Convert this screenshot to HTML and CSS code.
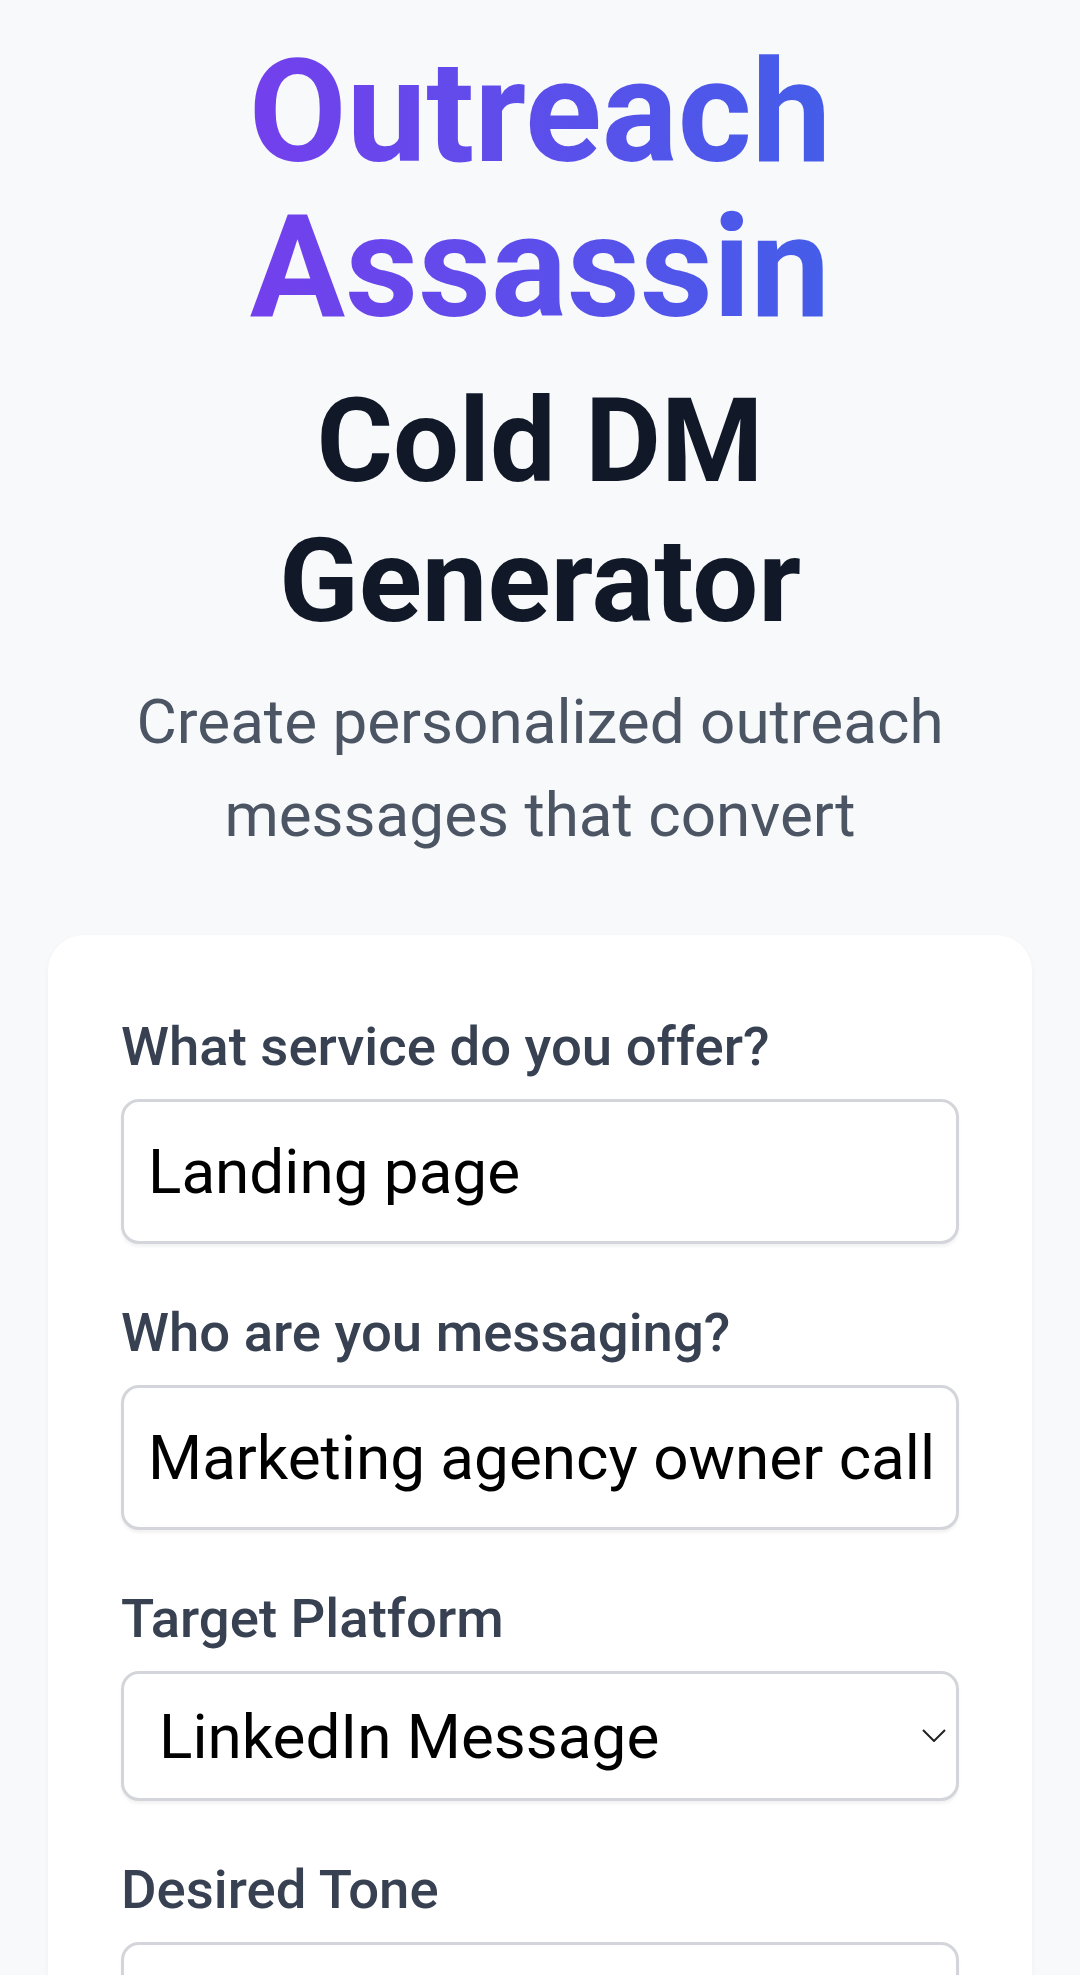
FILE: index.html
```html
<!DOCTYPE html>
<html lang="en">
<head>
  <meta charset="UTF-8">
  <meta name="viewport" content="width=device-width, initial-scale=1.0">
  <title>Outreach Assassin - Cold DM Generator</title>

  <link rel="stylesheet" href="styles.css">

</head>
<body>

  <div id="app">
    <header class="intro">
      <h1 class="brand">Outreach Assassin</h1>
      <h2 class="tool-name">Cold DM Generator</h2>
      <p class="subtitle">Create personalized outreach messages that convert</p>
    </header>

    <form class="card" onsubmit="return false">
      <div class="field">
        <label for="service">What service do you offer?</label>
        <input id="service" type="text" value="Landing page">
      </div>

      <div class="field">
        <label for="target">Who are you messaging?</label>
        <input id="target" type="text" value="Marketing agency owner call">
      </div>

      <div class="field">
        <label for="platform">Target Platform</label>
        <div class="select-wrap">
          <select id="platform">
            <option>LinkedIn Message</option>
            <option>Instagram DM</option>
            <option>Twitter / X DM</option>
            <option>Cold Email</option>
          </select>
          <svg class="chevron" viewBox="0 0 24 13" width="24" height="13">
            <path d="M1 1 L12 12 L23 1" fill="none" stroke="#222" stroke-width="2"/>
          </svg>
        </div>
      </div>

      <div class="field">
        <label for="tone">Desired Tone</label>
        <div class="select-wrap">
          <select id="tone">
            <option>Professional</option>
            <option>Friendly</option>
            <option>Casual</option>
          </select>
          <svg class="chevron" viewBox="0 0 24 13" width="24" height="13">
            <path d="M1 1 L12 12 L23 1" fill="none" stroke="#222" stroke-width="2"/>
          </svg>
        </div>
      </div>
    </form>
  </div>

</body>
</html>
```

FILE: styles.css
```css
* {
  margin: 0;
  padding: 0;
  box-sizing: border-box;
}

body {
  background: #f8f9fb;
  font-family: Roboto, "Noto Sans", sans-serif;
}

#app {
  padding: 35px 48px 0;
}

.intro {
  text-align: center;
}

.brand {
  font-size: 142px;
  line-height: 155px;
  font-weight: 700;
  width: fit-content;
  max-width: 800px;
  margin: 0 auto;
  background: linear-gradient(90deg, #7c3aed, #3b63e8);
  -webkit-background-clip: text;
  background-clip: text;
  color: transparent;
}

.tool-name {
  font-size: 117px;
  line-height: 140px;
  font-weight: 700;
  color: #111827;
  max-width: 760px;
  margin: 26px auto 0;
}

.subtitle {
  font-size: 62px;
  line-height: 93px;
  color: #4b5563;
  max-width: 900px;
  margin: 24px auto 0;
}

.card {
  margin-top: 74px;
  background: #fff;
  border-radius: 36px;
  padding: 72px 73px;
  box-shadow: 0 2px 6px rgba(17, 24, 39, 0.04);
}

.field + .field {
  margin-top: 49px;
}

.field label {
  display: block;
  font-size: 54.5px;
  line-height: 78px;
  font-weight: 500;
  color: #374151;
  margin-bottom: 14px;
}

.field input,
.field select {
  display: block;
  width: 100%;
  border: 3px solid #d3d5da;
  border-radius: 18px;
  background: #fff;
  font-family: Roboto, "Noto Sans", sans-serif;
  font-size: 62px;
  color: #000;
  box-shadow: 0 3px 3px rgba(0, 0, 0, 0.05);
  outline: none;
}

.field input {
  height: 145px;
  padding: 0 14px 0 24px;
}

.select-wrap {
  position: relative;
}

.field select {
  height: 130px;
  padding: 0 60px 0 35px;
  -webkit-appearance: none;
  appearance: none;
}

.chevron {
  position: absolute;
  right: 13px;
  top: 58px;
  pointer-events: none;
}
```
